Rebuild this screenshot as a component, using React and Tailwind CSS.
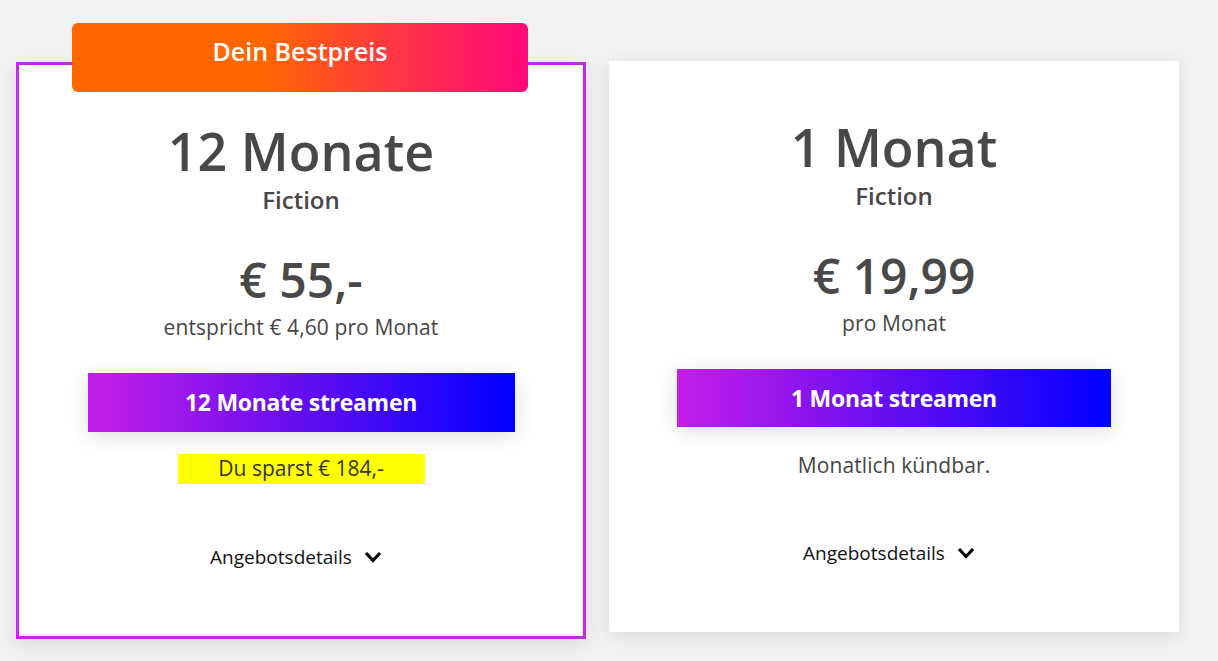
import React from "react";

const font = { fontFamily: '"Open Sans", "Noto Sans", Arial, sans-serif' };

function Chevron() {
  return (
    <svg width="18" height="12" viewBox="0 0 18 12" className="ml-[12px]">
      <polyline points="2,2 9,9.5 16,2" fill="none" stroke="#000" strokeWidth="3.2" strokeLinecap="butt" strokeLinejoin="miter" />
    </svg>
  );
}

function Details() {
  return (
    <div className="flex items-center justify-center pr-[10px] text-[19px] leading-[28px] text-[#111]">
      <span>Angebotsdetails</span>
      <Chevron />
    </div>
  );
}

export default function App() {
  return (
    <div className="min-h-[661px] w-full bg-[#f2f2f2]" style={font}>
      <div className="flex items-start gap-[23px] pl-[16px] pt-[61px]">
        {/* Left card */}
        <div className="relative mt-[1px] flex h-[577px] w-[570px] flex-col items-center border-[3px] border-[#c32ae6] bg-white shadow-[0_6px_18px_rgba(0,0,0,0.10)]">
          <div className="absolute left-[53px] top-[-42px] flex h-[69px] w-[456px] items-center justify-center rounded-[6px] bg-[linear-gradient(90deg,#ff6600_0%,#ff6600_42%,#ff3a3f_68%,#ff0878_100%)] pb-[11px] text-[25px] font-semibold text-white">
            Dein Bestpreis
          </div>
          <div className="mt-[56px] text-[52px] font-semibold leading-[60px] text-[#484848]">12 Monate</div>
          <div className="mt-[5px] text-[24px] font-semibold leading-[28px] text-[#484848]">Fiction</div>
          <div className="mt-[38px] text-[48px] font-semibold leading-[56px] text-[#484848]">€ 55,-</div>
          <div className="mt-[5px] text-[21px] font-normal leading-[28px] text-[#454545] tracking-[0.1px]">entspricht € 4,60 pro Monat</div>
          <div className="mt-[32px] flex h-[59px] w-[427px] items-center justify-center bg-[linear-gradient(90deg,#c41ee8_0%,#5a0cf2_55%,#0000ff_100%)] text-[23px] font-bold text-white tracking-[-0.3px] shadow-[0_4px_22px_rgba(0,0,0,0.13)]">
            12 Monate streamen
          </div>
          <div className="mt-[22px] flex h-[30px] w-[247px] items-center justify-center bg-[#ffff00] text-[21px] font-normal text-[#333]">
            Du sparst € 184,-
          </div>
          <div className="mt-[59px]">
            <Details />
          </div>
        </div>

        {/* Right card */}
        <div className="flex h-[571px] w-[570px] flex-col items-center bg-white shadow-[0_4px_18px_rgba(0,0,0,0.10)]">
          <div className="mt-[56px] text-[52px] font-semibold leading-[60px] text-[#484848]">1 Monat</div>
          <div className="mt-[5px] text-[24px] font-semibold leading-[28px] text-[#484848]">Fiction</div>
          <div className="mt-[38px] text-[48px] font-semibold leading-[56px] text-[#484848]">€ 19,99</div>
          <div className="mt-[5px] text-[21px] font-normal leading-[28px] text-[#454545] tracking-[0.1px]">pro Monat</div>
          <div className="mt-[32px] flex h-[58px] w-[434px] items-center justify-center bg-[linear-gradient(90deg,#c41ee8_0%,#5a0cf2_55%,#0000ff_100%)] text-[23px] font-bold text-white tracking-[-0.3px] shadow-[0_4px_22px_rgba(0,0,0,0.13)]">
            1 Monat streamen
          </div>
          <div className="mt-[24px] text-[21px] font-normal leading-[28px] text-[#454545] tracking-[0.1px]">Monatlich kündbar.</div>
          <div className="mt-[60px]">
            <Details />
          </div>
        </div>
      </div>
    </div>
  );
}
